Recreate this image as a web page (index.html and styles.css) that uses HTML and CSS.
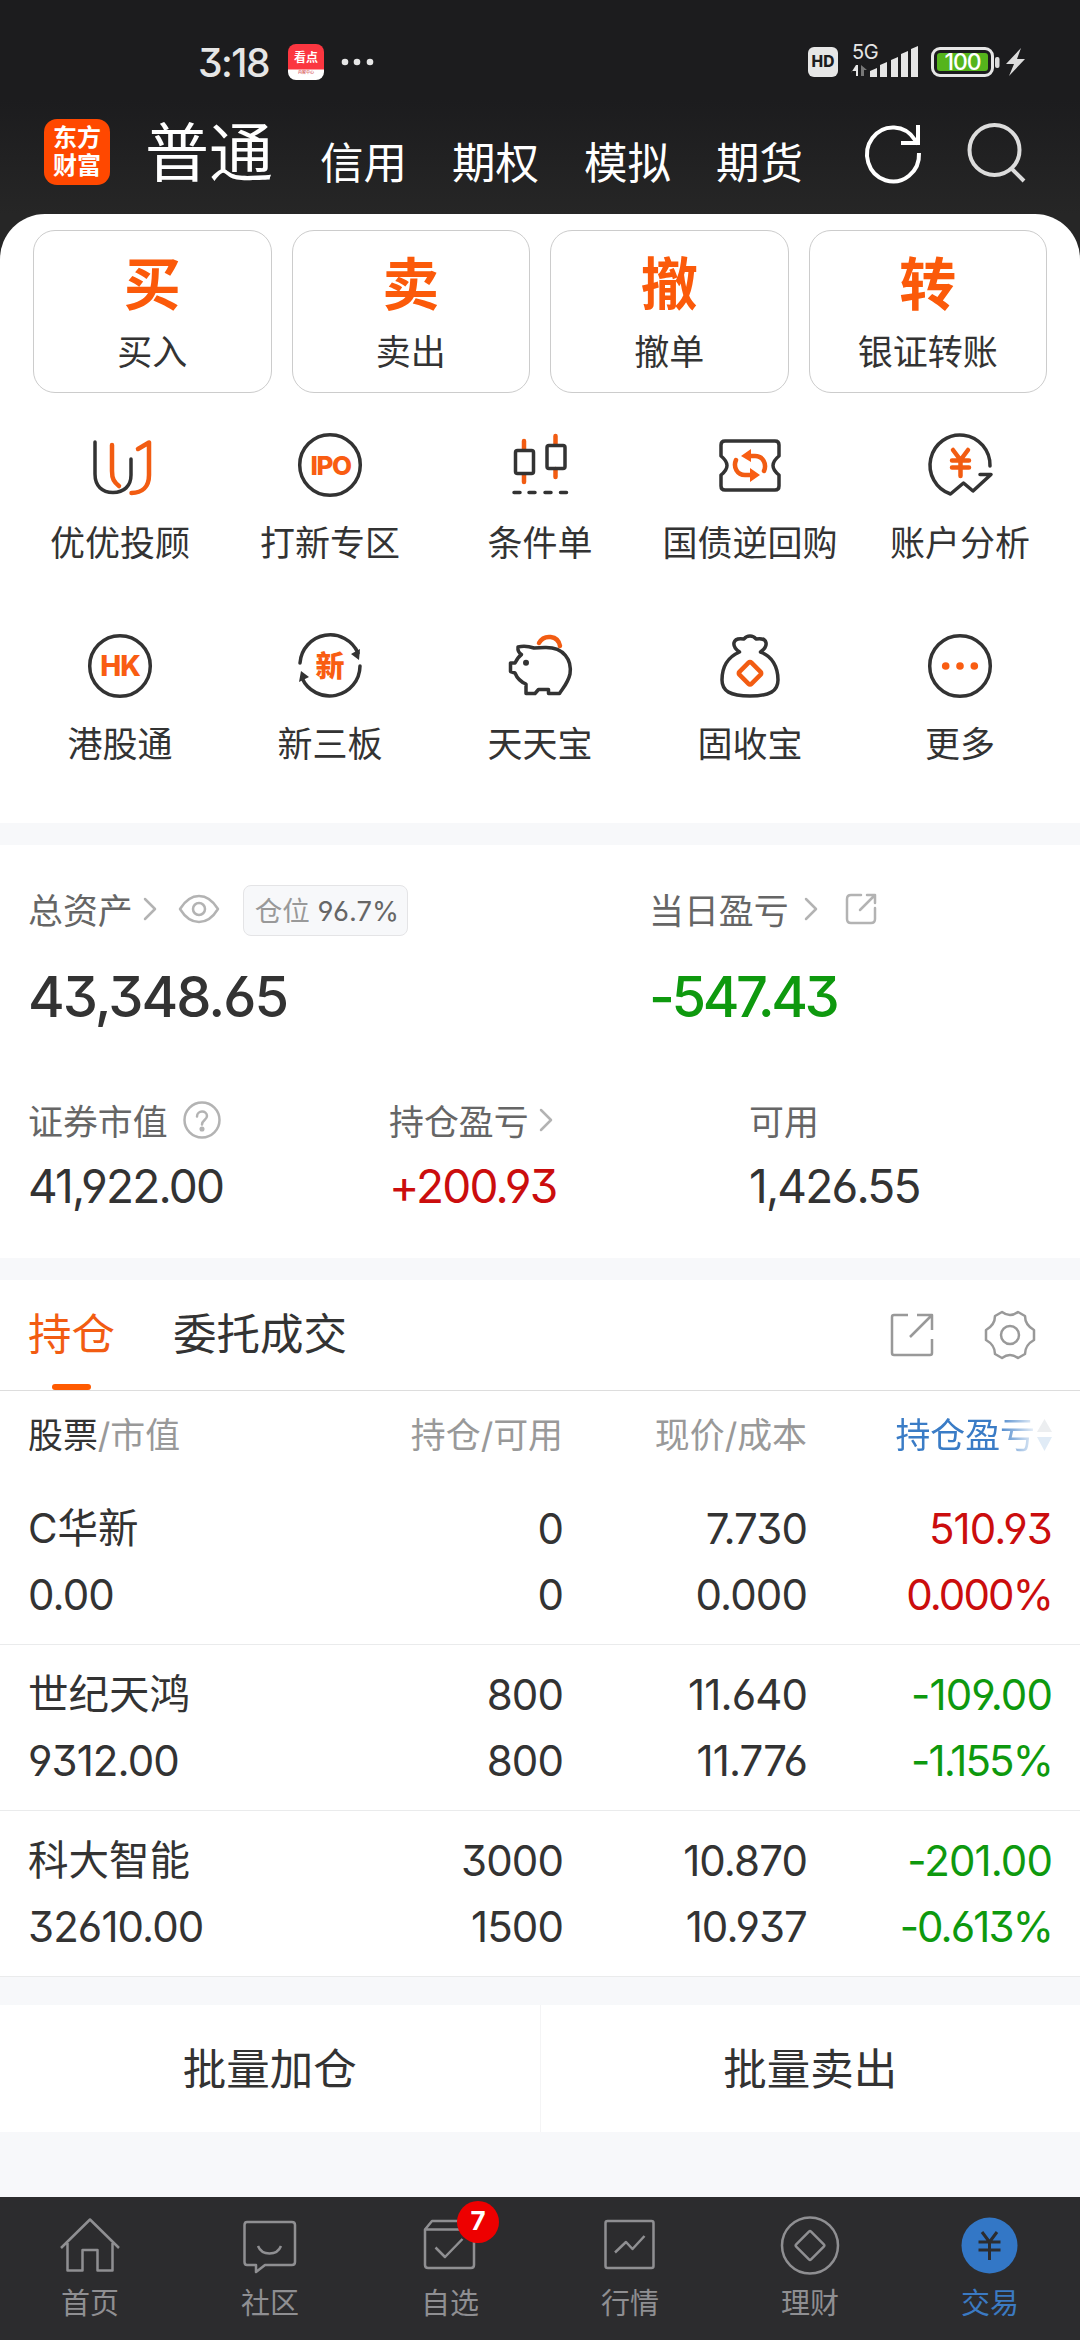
FILE: index.html
```html
<!DOCTYPE html>
<html lang="zh-CN">
<head>
    <meta charset="UTF-8">
    <meta name="viewport" content="width=device-width, initial-scale=1.0">
    <title>交易</title>
    <link rel="stylesheet" href="styles.css">
</head>
<body>
    <header class="top">
        <div class="status-bar">
            <div class="status-left">
                <span class="clock">3:18</span>
                <div class="news-icon"><b>看点</b><i>内容中心</i></div>
                <svg width="34" height="8" viewBox="0 0 34 8" fill="#e6e6e6"><circle cx="4" cy="4" r="3.3"/><circle cx="16" cy="4" r="3.3"/><circle cx="29" cy="4" r="3.3"/></svg>
            </div>
            <div class="status-right">
                <span class="hd">HD</span>
                <svg class="signal" width="70" height="44" viewBox="0 -8 70 44" fill="#e6e6e6">
                    <text x="1" y="17" class="net">5G</text>
                    <path d="M0 31L5 23V34H7V23H5L5 29L1 29Z"/>
                    <path d="M10 34V23L16 28H13V34Z" fill="#777"/>
                    <path d="M19 35V29L26 26V35Z"/>
                    <path d="M29 35V23L36 20V35Z"/>
                    <path d="M40 35V18L47 15V35Z"/>
                    <path d="M50 35V12L57 9V35Z"/>
                    <path d="M60 35V7L67 4V35Z"/>
                </svg>
                <span class="battery">100</span>
                <svg width="32" height="30" viewBox="0 0 32 30" fill="#dcdcdc"><rect x="1" y="10" width="4.500" height="11" rx="2"/><path d="M27 1L12 17H20L15 29L31 12H23Z"/></svg>
            </div>
        </div>
        <nav class="account-nav">
            <div class="logo"><span>东方</span><span>财富</span></div>
            <a class="account active">普通</a>
            <a class="account">信用</a>
            <a class="account">期权</a>
            <a class="account">模拟</a>
            <a class="account">期货</a>
            <svg class="refresh" width="60" height="60" viewBox="0 0 60 60" fill="none" stroke="#fff" stroke-width="4"><path d="M55 31A26 27 0 1 1 51 18L54 22"/><path d="M37 21H54V3"/></svg>
            <svg width="60" height="60" viewBox="0 0 60 60" fill="none" stroke="#dcdcdc" stroke-width="4"><circle cx="27.500" cy="28" r="25"/><path d="M44 46L57 59"/></svg>
        </nav>
    </header>

    <main>
        <section class="actions">
            <div class="trade-cards">
                <div class="card"><b>买</b><span>买入</span></div>
                <div class="card"><b>卖</b><span>卖出</span></div>
                <div class="card"><b>撤</b><span>撤单</span></div>
                <div class="card"><b>转</b><span>银证转账</span></div>
            </div>
            <div class="shortcuts">
                <div class="shortcut">
                    <svg class="icon" viewBox="0 0 64 64"><path d="M7 9V41C7 53 14 59.500 25 59.500S43 53 43 42V26"/><path class="hot" d="M24 12V38C24 46 26 49 31 53M50 16L61 9.500V42C61 54 54 60 43.500 60"/></svg>
                    <span>优优投顾</span>
                </div>
                <div class="shortcut">
                    <svg class="icon" viewBox="0 0 64 64"><circle cx="32" cy="32" r="30.300"/><text class="ipo" x="32.500" y="41.500">IPO</text></svg>
                    <span>打新专区</span>
                </div>
                <div class="shortcut">
                    <svg class="icon" viewBox="0 0 64 64"><path class="hot" d="M16 8V16M16 42V49M47.500 3V11M47.500 36V44"/><rect x="7.500" y="17.500" width="18" height="23" rx="2"/><rect x="39" y="12.500" width="18" height="23" rx="2"/><path d="M6 59.500H12M21 59.500H27M37 59.500H43M52.500 59.500H58.500"/></svg>
                    <span>条件单</span>
                </div>
                <div class="shortcut">
                    <svg class="icon" viewBox="0 0 64 64"><path d="M7 8H57Q61 8 61 12V23C56 27 55 30 55 32.500S56 38 61 42V53Q61 57 57 57H7Q3 57 3 53V42C8 38 9 35 9 32.500S8 27 3 23V12Q3 8 7 8Z"/><path class="hot" d="M29 23H37C45 23 49 31 46 38M34 42H27C19 42 15 34 18 27"/><path class="hot-fill" d="M23 23L33 16V29ZM42 42L32 35V49Z"/></svg>
                    <span>国债逆回购</span>
                </div>
                <div class="shortcut">
                    <svg class="icon" viewBox="0 0 64 64"><path d="M62 33A30 30.300 0 1 0 22.500 61L35.500 50L45 58L63 41.500H52"/><path class="hot" d="M25 17L32.500 27L40 17M24 27.500H41M24 34.500H41M32.500 27V43"/></svg>
                    <span>账户分析</span>
                </div>
                <div class="shortcut">
                    <svg class="icon" viewBox="0 0 64 64"><circle cx="32" cy="32" r="30.300"/><text x="32" y="42">HK</text></svg>
                    <span>港股通</span>
                </div>
                <div class="shortcut">
                    <svg class="icon" viewBox="0 0 64 64"><path d="M2 29A30.300 30.300 0 0 1 60 19M62 32A30.300 30.300 0 0 1 4 44"/><path class="dark-fill" d="M61 26L53 20L62 15ZM3 37L1 48L11 43Z"/><text class="cjk" x="32" y="43">新</text></svg>
                    <span>新三板</span>
                </div>
                <div class="shortcut">
                    <svg class="icon" viewBox="0 0 64 64"><path d="M26 14C20 12 14 12 10 13C9.500 17 11 19 13.500 20.500C10 23 8.500 26 7 29H2.500V37.500L7 39C9 44 13 48 18 50V59.500H27L30.500 55.500H40.500V59.500H51.500C55 54 60 49 62 40C64 26 56 13 37 13.500Z"/><circle class="dark-fill" cx="18" cy="28.700" r="3"/><path class="hot" d="M31 9C36 0 50 1 52 12"/></svg>
                    <span>天天宝</span>
                </div>
                <div class="shortcut">
                    <svg class="icon" viewBox="0 0 64 64"><path d="M21.500 18C13 12 14 3 26 5C29 1 35 1 38 5C50 3 51 12 42.500 18C54 22 60 33 60 46C60 57 52 62 32 62S4 57 4 46C4 33 10 23 21.500 18Z"/><rect class="hot" x="23.500" y="30.800" width="17" height="17" rx="2" transform="rotate(45 32 39.300)"/></svg>
                    <span>固收宝</span>
                </div>
                <div class="shortcut">
                    <svg class="icon" viewBox="0 0 64 64"><circle cx="32" cy="32" r="30.300"/><g class="hot-fill"><circle cx="17.700" cy="32" r="3.800"/><circle cx="32" cy="32" r="3.800"/><circle cx="46.300" cy="32" r="3.800"/></g></svg>
                    <span>更多</span>
                </div>
            </div>
        </section>

        <section class="assets">
            <div class="asset total">
                <div class="label">总资产
                    <svg class="chevron" viewBox="0 0 14 24"><path d="M2 2L12 12L2 22"/></svg>
                    <svg class="eye" viewBox="0 0 42 30"><path d="M2 15Q10 2 21 2T40 15Q32 28 21 28T2 15Z"/><circle cx="21" cy="15" r="6"/></svg>
                    <span class="ratio">仓位 <em>96.7%</em></span>
                </div>
                <div class="value big">43,348.65</div>
            </div>
            <div class="asset today">
                <div class="label">当日盈亏
                    <svg class="chevron wide" viewBox="0 0 14 24"><path d="M2 2L12 12L2 22"/></svg>
                    <svg class="share" viewBox="0 0 32 32"><path d="M16 2H6Q2 2 2 6V26Q2 30 6 30H26Q30 30 30 26V15M22 2H30V10M30 2L15 17"/></svg>
                </div>
                <div class="value big down">-547.43</div>
            </div>
            <div class="asset market">
                <div class="label">证券市值
                    <svg class="help" viewBox="0 0 38 38"><circle cx="19" cy="19" r="17.500"/><path d="M14 15.500C14 9 24 9 24 15C24 19 19 19 19 23.500"/><circle class="dot" cx="19" cy="28" r="1.300"/></svg>
                </div>
                <div class="value">41,922.00</div>
            </div>
            <div class="asset profit">
                <div class="label">持仓盈亏
                    <svg class="chevron" viewBox="0 0 14 24"><path d="M2 2L12 12L2 22"/></svg>
                </div>
                <div class="value up">+200.93</div>
            </div>
            <div class="asset cash">
                <div class="label">可用</div>
                <div class="value">1,426.55</div>
            </div>
        </section>

        <section class="positions">
            <div class="tabs">
                <a class="tab active">持仓</a>
                <a class="tab">委托成交</a>
                <svg class="tab-icon" width="44" height="44" viewBox="0 0 44 44"><path d="M18 2H4Q2 2 2 4V40Q2 42 4 42H40Q42 42 42 40V26M27 2H42V17M42 2L20 24"/></svg>
                <svg class="tab-icon" width="52" height="50" viewBox="0 0 52 50"><path d="M18 2Q26 8 34 2L41 6Q41 15 50 20V30Q41 35 41 44L34 48Q26 42 18 48L11 44Q11 35 2 30V20Q11 15 11 6Z"/><circle cx="26" cy="25" r="9"/></svg>
            </div>
            <div class="row head">
                <div><strong>股票</strong>/市值</div>
                <div>持仓/可用</div>
                <div>现价/成本</div>
                <div class="sorted"><span>持仓盈亏</span><svg width="15" height="32" viewBox="0 0 15 32"><path d="M7.500 0L15 13H0Z" fill="#eceef0"/><path d="M0 18H15L7.500 32Z" fill="#e0ebf6"/></svg></div>
            </div>
            <div class="row">
                <div><span class="name">C华新</span>0.00</div>
                <div><span>0</span>0</div>
                <div><span>7.730</span>0.000</div>
                <div class="up"><span>510.93</span><span class="percent">0.000%</span></div>
            </div>
            <div class="row">
                <div><span class="name">世纪天鸿</span>9312.00</div>
                <div><span>800</span>800</div>
                <div><span>11.640</span>11.776</div>
                <div class="down"><span>-109.00</span><span class="percent">-1.155%</span></div>
            </div>
            <div class="row">
                <div><span class="name">科大智能</span>32610.00</div>
                <div><span>3000</span>1500</div>
                <div><span>10.870</span>10.937</div>
                <div class="down"><span>-201.00</span><span class="percent">-0.613%</span></div>
            </div>
        </section>

        <section class="batch">
            <button>批量加仓</button>
            <button>批量卖出</button>
        </section>
    </main>

    <footer class="tabbar">
        <a class="nav-item">
            <svg viewBox="0 0 60 60"><path d="M1 33L30 4.500L59 33M7.500 28V55.500H22.500V35H37.500V55.500H52.500V28"/></svg>
            <span>首页</span>
        </a>
        <a class="nav-item">
            <svg viewBox="0 0 60 60"><path d="M7 7H52Q55 7 55 10V47Q55 50 52 50H25L16 57V50H7Q4.500 50 4.500 47V10Q4.500 7 7 7ZM18 31C22 41 37 41 41 31"/></svg>
            <span>社区</span>
        </a>
        <a class="nav-item">
            <svg viewBox="0 0 60 60"><path d="M5 14.500H54V50Q54 53 51 53H8Q5 53 5 50ZM5 14.500L12 6H47L54 14.500M15.500 32.500L25 42L42.500 24"/></svg>
            <span>自选</span>
            <b class="badge">7</b>
        </a>
        <a class="nav-item">
            <svg viewBox="0 0 60 60"><rect x="5.500" y="6" width="48" height="47" rx="2"/><path d="M15 37.500L26 27L32.500 34L44.500 21"/></svg>
            <span>行情</span>
        </a>
        <a class="nav-item">
            <svg viewBox="0 0 60 60"><circle cx="30" cy="30.500" r="28"/><rect x="19.500" y="20" width="21" height="21" rx="1.500" transform="rotate(45 30 30.500)"/></svg>
            <span>理财</span>
        </a>
        <a class="nav-item current">
            <svg viewBox="0 0 60 60"><circle class="disc" cx="29.500" cy="30.500" r="28"/><path d="M22 17L29.500 27L37 17M18.500 27H40.500M18.500 35H40.500M29.500 27V45"/></svg>
            <span>交易</span>
        </a>
    </footer>
</body>
</html>
```
FILE: styles.css
```css
* {
    margin: 0;
    padding: 0;
    box-sizing: border-box;
}

body {
    width: 1080px;
    height: 2340px;
    display: flex;
    flex-direction: column;
    font-family: Inter, 'Noto Sans CJK SC', sans-serif;
    font-feature-settings: 'cv03', 'cv04', 'cv09';
    color: #333;
    background: #f7f8fa;
    overflow: hidden;
}

svg {
    display: block;
    flex-shrink: 0;
}

.top {
    height: 259px;
    margin-bottom: -45px;
    background: linear-gradient(#1c1c1e 100px, #262626 214px);
}

.status-bar {
    height: 114px;
    padding: 10px 54px 0 198px;
    display: flex;
    align-items: center;
    justify-content: space-between;
}

.status-left,
.status-right {
    display: flex;
    align-items: center;
}

.clock {
    width: 90px;
    font-size: 39px;
    font-weight: 500;
    letter-spacing: -1.5px;
    color: #e6e6e6;
}

.news-icon {
    width: 36px;
    height: 36px;
    margin-right: 17px;
    padding-top: 7px;
    border-radius: 8px;
    display: flex;
    flex-direction: column;
    align-items: center;
    gap: 5px;
    background: linear-gradient(#fb3640 25px, #fff 26px);
}

.news-icon b {
    font-size: 12px;
    line-height: 14px;
    color: #fff;
}

.news-icon i {
    font-size: 4px;
    line-height: 6px;
    font-style: normal;
    color: #c22;
}

.hd {
    width: 30px;
    height: 30px;
    margin-right: 13px;
    border-radius: 6px;
    background: #e6e6e6;
    color: #1c1c1e;
    font-size: 15.500px;
    font-weight: 800;
    line-height: 30px;
    text-align: center;
}

.signal {
    margin: -12px 10px 0 0;
}

.net {
    font-size: 20px;
    letter-spacing: -0.500px;
}

.battery {
    width: 63px;
    height: 30px;
    border: 3px solid #e6e6e6;
    border-radius: 9px;
    padding: 3px;
    background: #55b41c content-box;
    color: #fff;
    font-size: 23px;
    font-weight: 500;
    letter-spacing: -1px;
    line-height: 18px;
    text-align: center;
}

.account-nav {
    height: 100px;
    padding-left: 44px;
    display: flex;
}

.logo {
    width: 66px;
    height: 66px;
    margin: 5px 35px 0 0;
    padding-top: 5px;
    border-radius: 13px;
    background: #ff4800;
    color: #fff;
    font-size: 24px;
    font-weight: 700;
    line-height: 28px;
    text-align: center;
}

.logo span {
    display: block;
}

.account {
    width: 132px;
    padding-top: 17px;
    color: #fff;
    font-size: 43.500px;
    line-height: 64px;
}

.account.active {
    width: 175px;
    padding-top: 5px;
    font-size: 64px;
    line-height: 68px;
}

.refresh {
    margin: 0 43px 0 16px;
}

.account-nav > svg {
    margin-top: 8px;
    overflow: visible;
}

.actions {
    height: 609px;
    padding: 16px 33px 0;
    border-radius: 45px 45px 0 0;
    background: #fff;
}

.trade-cards {
    display: grid;
    grid-template-columns: repeat(4, 1fr);
    gap: 20px;
}

.card {
    height: 163px;
    padding-top: 20px;
    border: 1px solid #ccc;
    border-radius: 22px;
    text-align: center;
    font-size: 35px;
    line-height: 52px;
}

.card b {
    display: block;
    margin-bottom: 7px;
    font-size: 57px;
    line-height: 68px;
    color: #fb5a0a;
}

.card span {
    display: block;
}

.shortcuts {
    margin: 40px -19px 0;
    display: grid;
    grid-template-columns: repeat(5, 210px);
    justify-content: center;
}

.shortcut {
    height: 201px;
    display: flex;
    flex-direction: column;
    align-items: center;
    gap: 20px;
    font-size: 35px;
    line-height: 52px;
    white-space: nowrap;
}

.icon {
    width: 64px;
    height: 64px;
    overflow: visible;
    fill: none;
    stroke: #333;
    stroke-width: 3.500;
    stroke-linecap: round;
    stroke-linejoin: round;
}

.icon .hot {
    stroke: #f25c12;
    stroke-width: 4.500;
}

.icon .hot-fill,
.icon text {
    fill: #f95d12;
    stroke: none;
}

.icon .dark-fill {
    fill: #333;
    stroke: none;
}

.icon text {
    font-size: 28px;
    font-weight: 800;
    text-anchor: middle;
    letter-spacing: -1px;
}

.icon .ipo {
    font-size: 26px;
    letter-spacing: -1.500px;
}

.icon .cjk {
    font-size: 29px;
    letter-spacing: 0;
}

.assets {
    height: 413px;
    margin: 22px 0;
    padding: 37px 29px 0 28px;
    display: grid;
    grid-template-columns: repeat(12, 1fr);
    grid-template-rows: 211px 1fr;
    background: #fff;
}

.asset {
    white-space: nowrap;
}

.total {
    grid-column: 1 / -1;
    grid-row: 1;
    width: 621px;
}

.today {
    grid-column: 1 / -1;
    grid-row: 1;
    margin-left: 621px;
}

.market {
    grid-column: 1 / 5;
}

.profit,
.cash {
    grid-column: span 4;
}

.profit {
    padding-left: 20px;
}

.cash {
    padding-left: 39px;
}

.label {
    height: 54px;
    display: flex;
    align-items: center;
    font-size: 34.900px;
    color: #666;
}

.label svg {
    fill: none;
    stroke: #b3b3b3;
    stroke-width: 2.500;
    stroke-linecap: round;
    stroke-linejoin: round;
}

.chevron {
    width: 14px;
    height: 24px;
    margin-left: 10px;
}

.chevron.wide {
    margin-left: 15px;
}

.eye {
    width: 42px;
    height: 30px;
    margin: 0 23px 0 21px;
}

.share {
    width: 32px;
    height: 32px;
    margin-left: 27px;
}

.help {
    width: 38px;
    height: 38px;
    margin-left: 15px;
}

.label .dot {
    fill: #b3b3b3;
}

.ratio {
    width: 165px;
    height: 51px;
    margin-top: 2px;
    padding-left: 11px;
    border: 1px solid #e4e4e6;
    border-radius: 8px;
    background: #f7f8fa;
    color: #999;
    font-size: 27.500px;
    line-height: 50px;
}

.ratio em {
    font-style: normal;
    color: #666;
}

.value {
    padding-top: 11px;
    font-size: 46px;
    line-height: 56px;
    letter-spacing: -1.800px;
}

.value.big {
    padding-top: 25px;
    font-size: 56px;
    font-weight: 500;
    line-height: 72px;
    letter-spacing: -2px;
}

.value.big.down {
    letter-spacing: -3.400px;
}

.up {
    color: #cb0d0d;
}

.down {
    color: #0e990e;
}

.positions {
    background: #fff;
}

.tabs {
    height: 111px;
    padding: 0 44px 0 28px;
    display: flex;
    align-items: center;
    border-bottom: 1px solid #ddd;
}

.tab {
    height: 110px;
    margin-right: 58px;
    font-size: 43.500px;
    line-height: 109px;
}

.tab.active {
    color: #f25c12;
}

.tab.active::after {
    content: '';
    display: block;
    width: 39px;
    height: 6px;
    margin: -5px auto 0;
    border-radius: 3px;
    background: #ff5a00;
}

.tab-icon {
    fill: none;
    stroke: #999;
    stroke-width: 2.500;
    stroke-linejoin: round;
}

.tab-icon:nth-of-type(1) {
    margin: 0 50px 0 auto;
}

.row {
    height: 166px;
    padding: 17px 28px 0;
    display: grid;
    grid-template-columns: 260px 275px 244px 1fr;
    border-bottom: 1px solid #eaebec;
    font-size: 42px;
    line-height: 66px;
    letter-spacing: -0.900px;
    text-align: right;
}

.row > div:first-child {
    text-align: left;
}

.row > div > span {
    display: block;
}

.row .name {
    font-size: 40.500px;
    letter-spacing: 0;
}

.row .percent {
    letter-spacing: -1.900px;
}

.row.head {
    height: 88px;
    padding-top: 18px;
    border: none;
    font-size: 34.900px;
    line-height: 52px;
    letter-spacing: 0;
    color: #999;
}

.head strong {
    font-weight: 400;
    color: #333;
}

.sorted {
    height: 52px;
    display: flex;
    justify-content: flex-end;
    align-items: center;
    gap: 2px;
}

.sorted span {
    color: #3a7cc6;
    -webkit-mask-image: linear-gradient(to right, #000 72%, rgba(0, 0, 0, 0.1));
    mask-image: linear-gradient(to right, #000 72%, rgba(0, 0, 0, 0.1));
}

.batch {
    height: 127px;
    margin: 28px 0 65px;
    display: flex;
    background: #fff;
}

.batch button {
    flex: 1;
    padding-bottom: 5px;
    border: none;
    background: none;
    font: inherit;
    font-size: 43.500px;
    color: #333;
}

.batch button + button {
    border-left: 1px solid #f4f4f5;
}

.tabbar {
    height: 143px;
    display: flex;
    background: #2c2c2e;
}

.nav-item {
    position: relative;
    flex: 1;
    padding-top: 18px;
    display: flex;
    flex-direction: column;
    align-items: center;
    gap: 9px;
    color: #8f8f92;
    font-size: 29px;
    line-height: 40px;
}

.nav-item svg {
    width: 60px;
    height: 60px;
    fill: none;
    stroke: #8f8f92;
    stroke-width: 2.500;
    stroke-linejoin: round;
}

.nav-item.current {
    color: #3b7ac2;
}

.current .disc {
    fill: #3377c6;
    stroke: none;
}

.nav-item.current path {
    stroke: #2c2c2e;
    stroke-width: 3;
}

.badge {
    position: absolute;
    left: 97px;
    top: 4px;
    width: 42px;
    height: 42px;
    border-radius: 50%;
    background: #ee0000;
    color: #fff;
    font-size: 26px;
    line-height: 40px;
    text-align: center;
}
```
